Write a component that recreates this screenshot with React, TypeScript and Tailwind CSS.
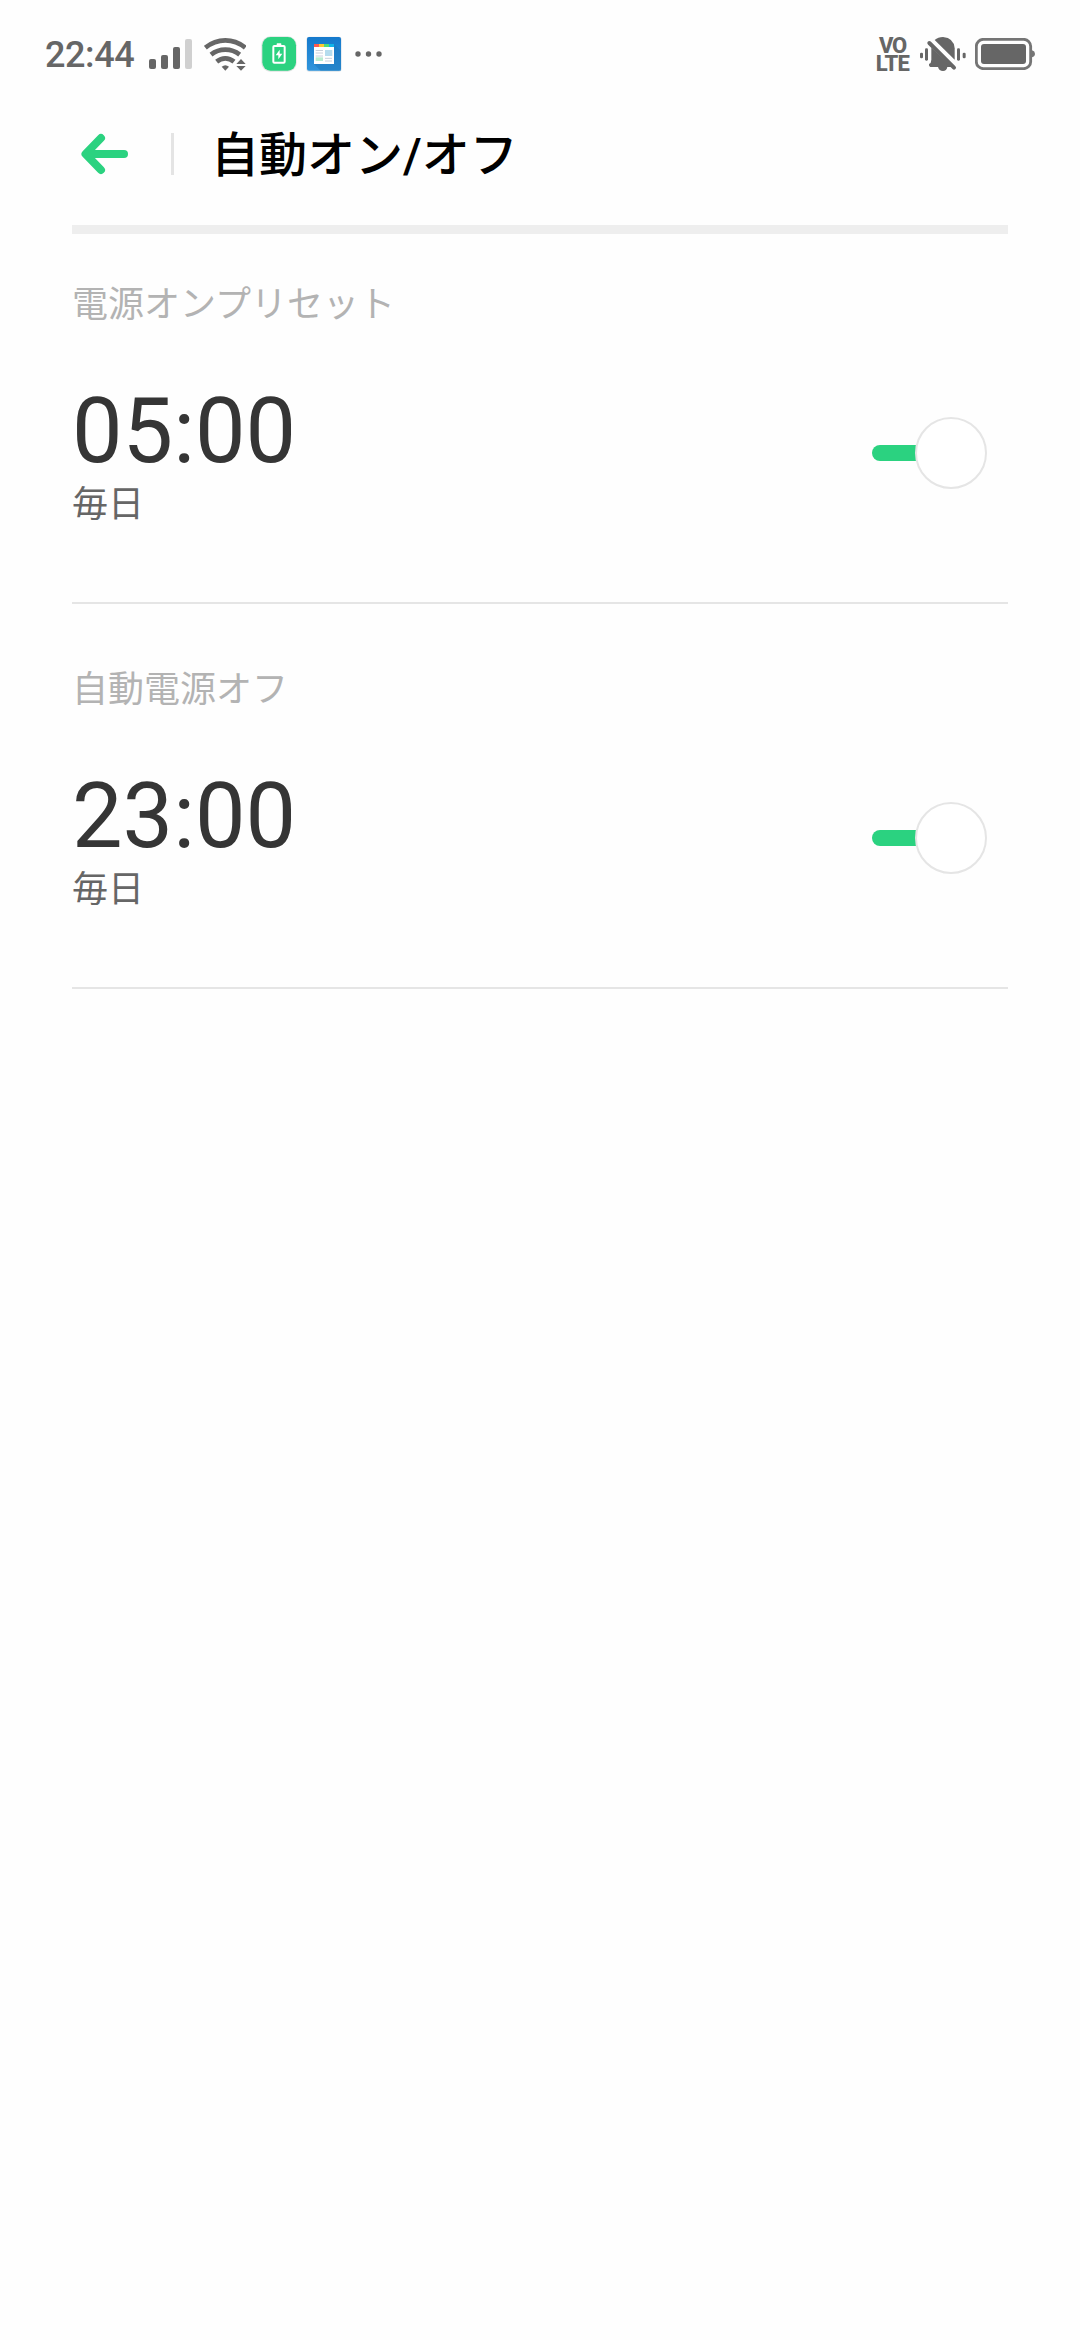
import React, { useState } from 'react';

interface Schedule {
  id: string;
  label: string;
  time: string;
  repeat: string;
}

const schedules: Schedule[] = [
  { id: 'on', label: '電源オンプリセット', time: '05:00', repeat: '毎日' },
  { id: 'off', label: '自動電源オフ', time: '23:00', repeat: '毎日' },
];

const SignalIcon = () => (
  <svg className="ml-[15px]" width="43" height="30" viewBox="0 0 43 30" fill="#666666">
    <rect x="0" y="20" width="7" height="10" rx="2" />
    <rect x="12" y="16" width="7" height="14" rx="2" />
    <rect x="24" y="8" width="7" height="22" rx="2" />
    <rect x="36" y="0" width="7" height="30" rx="2" fill="#d0d0d0" />
  </svg>
);

const WifiIcon = () => (
  <svg className="ml-3" width="42" height="33" viewBox="0 0 126 99" fill="none">
    <g stroke="#666666" strokeWidth="14">
      <path d="M4 29 Q31 7 64 7 Q97 7 124 29" />
      <path d="M21 50 Q40 35 64 35 Q88 35 107 50" />
      <path d="M38 71 Q50 61 64 61 Q78 61 90 71" />
    </g>
    <path d="M53 86 Q64 77 75 86 L64 98 Z" fill="#666666" />
    <path d="M111 63 L125 78 H97 Z M97 84 H125 L111 98 Z" fill="#666666" />
  </svg>
);

const BatteryAppIcon = () => (
  <svg className="ml-[15px]" width="36" height="36" viewBox="0 0 108 108">
    <rect x="1" y="1" width="106" height="106" rx="27" fill="#dfe3e1" />
    <rect x="4" y="3" width="101" height="101" rx="25" fill="#2bd280" />
    <rect x="37" y="30" width="34" height="50" rx="3" fill="none" stroke="#ffffff" strokeWidth="6" />
    <rect x="47" y="22" width="14" height="6" rx="2" fill="#ffffff" />
    <path d="M56 41 L44 58 H52 V70 L64 53 H56 Z" fill="#ffffff" />
  </svg>
);

const NewsAppIcon = () => (
  <svg className="ml-[9px]" width="36" height="36" viewBox="0 0 108 108">
    <defs>
      <linearGradient id="news" x1="0" y1="0" x2="0" y2="1">
        <stop offset="0" stopColor="#1579cc" />
        <stop offset="1" stopColor="#3095dc" />
      </linearGradient>
    </defs>
    <rect x="1" y="2" width="106" height="105" rx="9" fill="#dde3e8" />
    <rect x="3" y="3" width="102" height="101" rx="6" fill="url(#news)" />
    <path d="M84 24 L105 45 V104 H44 L24 84 Z" fill="#1c75ba" opacity="0.5" />
    <rect x="24" y="24" width="60" height="60" fill="#ffffff" />
    <rect x="24" y="24" width="15" height="9" fill="#ff5a4f" />
    <rect x="39" y="24" width="15" height="9" fill="#ffc933" />
    <rect x="54" y="24" width="15" height="9" fill="#4fdc78" />
    <rect x="69" y="24" width="15" height="9" fill="#12b4ea" />
    <path d="M29 43.500 H51 M29 51 H51 M29 60 H51 M57 67 H78 M57 75 H78" stroke="#c8d0dc" strokeWidth="3" />
    <rect x="57" y="42" width="22" height="18" fill="#b5dcee" />
    <rect x="29" y="64" width="22" height="11" fill="#b9ecd0" />
  </svg>
);

const MoreIcon = () => (
  <svg className="ml-[13px]" width="28" height="6" viewBox="0 0 28 6" fill="#666666">
    <circle cx="3" cy="3" r="2.700" />
    <circle cx="13.500" cy="3" r="2.700" />
    <circle cx="24" cy="3" r="2.700" />
  </svg>
);

const MutedBellIcon = () => (
  <svg className="ml-[11px]" width="46" height="34" viewBox="0 0 138 102" fill="#666666">
    <rect x="0" y="47" width="9" height="17" rx="4" />
    <rect x="15" y="34" width="9" height="37" rx="4" />
    <rect x="111" y="34" width="9" height="37" rx="4" />
    <rect x="128" y="47" width="9" height="17" rx="4" />
    <path d="M44 9 Q54 0 69 0 Q102 3 104 34 V68 Z" />
    <path d="M34 32 L96 90 H82 Q80 102 69 102 Q57 102 54 90 H31 Q26 88 27 81 Q34 78 34 68 Z" />
    <path d="M28 18 L102 92" stroke="#666666" strokeWidth="12" strokeLinecap="round" />
  </svg>
);

const BatteryIcon = () => (
  <svg className="ml-[9px]" width="60" height="32" viewBox="0 0 180 96">
    <rect x="4" y="4" width="163" height="88" rx="21" fill="none" stroke="#757575" strokeWidth="8.500" />
    <rect x="18" y="18" width="135" height="60" rx="9" fill="#666666" />
    <path d="M171 37 Q180 40 180 47 Q180 55 171 58 Z" fill="#757575" />
  </svg>
);

const StatusBar = () => (
  <div className="flex h-[108px] items-center justify-between pr-[45px] pl-[45px]">
    <div className="flex items-center">
      <span className="pt-0.5 text-[36px] leading-[40px] font-medium -tracking-[0.400px] text-[#666666]">22:44</span>
      <SignalIcon />
      <WifiIcon />
      <BatteryAppIcon />
      <NewsAppIcon />
      <MoreIcon />
    </div>
    <div className="flex items-center">
      <div className="flex flex-col items-center pt-0.5 text-[22px] leading-[18px] font-extrabold text-[#666666]">
        <span className="-tracking-[1.500px]">VO</span>
        <span className="-tracking-[0.800px]">LTE</span>
      </div>
      <MutedBellIcon />
      <BatteryIcon />
    </div>
  </div>
);

const Header = () => (
  <header className="flex h-[92px] items-center pl-[81px]">
    <button aria-label="戻る">
      <svg width="48" height="42" viewBox="0 0 48 42" fill="none" stroke="#2bd280" strokeWidth="8">
        <path d="M20 5 L4.500 21 L20 37" strokeLinecap="round" strokeLinejoin="round" />
        <path d="M6 21 H43" strokeLinecap="round" />
      </svg>
    </button>
    <div className="ml-[42px] h-[42px] w-[3px] bg-[#e4e4e4]" />
    <h1 className="ml-[37px] pt-1 text-[48px] leading-[64px] font-medium text-black">自動オン/オフ</h1>
  </header>
);

const Toggle: React.FC<{ on: boolean; onChange: () => void }> = ({ on, onChange }) => (
  <button
    role="switch"
    aria-checked={on}
    onClick={onChange}
    className={`mb-1 flex h-[72px] w-[115px] items-center ${on ? '' : 'flex-row-reverse'}`}
  >
    <span className={`h-4 flex-1 ${on ? 'rounded-l-full bg-[#2bd280]' : 'rounded-r-full bg-[#e5e5e5]'}`} />
    <span className="-ml-px h-[72px] w-[72px] rounded-full border-2 border-[#e5e5e5] bg-white" />
  </button>
);

export default function App() {
  const [enabled, setEnabled] = useState<Record<string, boolean>>({ on: true, off: true });

  const toggle = (id: string) => {
    setEnabled((prev) => ({ ...prev, [id]: !prev[id] }));
  };

  return (
    <div
      lang="ja"
      className="min-h-[2340px] w-[1080px] bg-[#fefefe] font-[Roboto,'Noto_Sans_CJK_JP',sans-serif]"
    >
      <StatusBar />
      <Header />
      <main className="mx-[72px] mt-[25px] border-t-[9px] border-[#eeeeee]">
        {schedules.map((item) => (
          <section
            key={item.id}
            className="h-[385px] border-b-2 border-[#e5e5e5] pt-[60px] first:h-[370px] first:pt-[45px]"
          >
            <h2 className="text-[36px] leading-[52px] text-[#b3b3b3]">{item.label}</h2>
            <div className="mt-[48px] flex items-center justify-between pr-[21px]">
              <div>
                <div className="text-[90px] leading-[106px] text-[#353535]">{item.time}</div>
                <div className="-mt-1.5 text-[36px] leading-[52px] text-[#666666]">{item.repeat}</div>
              </div>
              <Toggle on={enabled[item.id]} onChange={() => toggle(item.id)} />
            </div>
          </section>
        ))}
      </main>
    </div>
  );
}
